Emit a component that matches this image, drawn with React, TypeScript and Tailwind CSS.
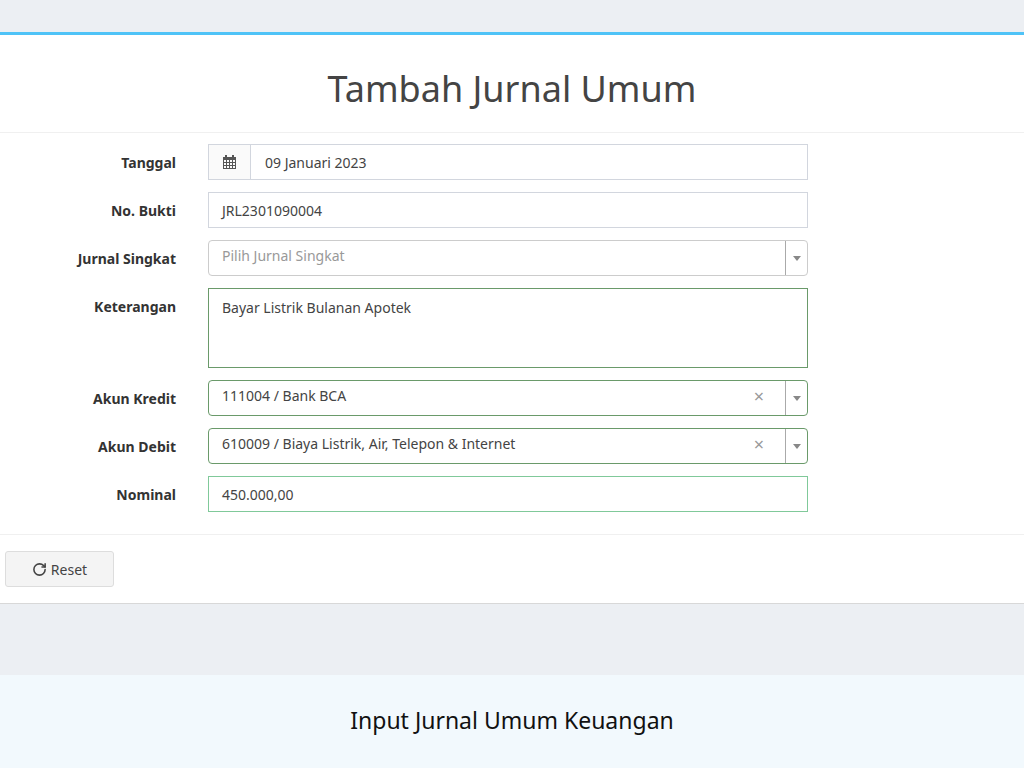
import { RotateCw } from "lucide-react";

function Row({ label, top, children }: { label: string; top?: boolean; children: React.ReactNode }) {
  return (
    <div className={`flex ${top ? "items-start" : "items-center"} gap-[32px]`}>
      <label className={`w-[176px] text-right text-[14px] font-bold text-[#333] ${top ? "pt-[8px]" : ""}`}>{label}</label>
      <div className="w-[600px]">{children}</div>
    </div>
  );
}

function Caret() {
  return (
    <div className="flex h-full w-[22px] items-center justify-center border-l border-[#aaa]">
      <div className="h-0 w-0 border-x-[4px] border-t-[5px] border-x-transparent border-t-[#888]" />
    </div>
  );
}

function Select({ value, placeholder }: { value?: string; placeholder?: string }) {
  return (
    <div className={`flex h-[36px] items-stretch rounded-[4px] border ${value ? "border-[#6a9a6a]" : "border-[#ccc]"} text-[14px]`}>
      <div className={`flex-1 pl-[13px] pt-[4px] ${value ? "text-[#444]" : "text-[#999]"}`}>{value ?? placeholder}</div>
      {value && <div className="flex w-[52px] items-center justify-center pb-[4px] text-[18px] text-[#999]">×</div>}
      <Caret />
    </div>
  );
}

export default function App() {
  return (
    <div className="flex h-[768px] flex-col bg-[#eceff3] font-['Lato',sans-serif]">
      <div className="h-[32px]" />
      <div className="border-t-[3px] border-[#4fc3f7] border-b border-b-[#d8d8d8] bg-white">
        <h1 className="h-[98px] border-b border-[#f0f0f0] pt-[34px] text-center text-[36px] leading-[40px] text-[#444]">Tambah Jurnal Umum</h1>
        <div className="flex flex-col gap-[12px] border-b border-[#f0f0f0] pb-[22px] pt-[11px]">
          <Row label="Tanggal">
            <div className="flex h-[36px] border border-[#d2d6de] text-[14px] text-[#444]">
              <div className="flex w-[42px] items-center justify-center border-r border-[#d2d6de] bg-[#fafafa]">
                <svg width="13" height="14" viewBox="0 0 13 14" fill="#555"><rect x="0" y="2" width="13" height="12" /><rect x="2" y="0" width="2" height="3" /><rect x="9" y="0" width="2" height="3" /><g fill="#fafafa"><rect x="1" y="5" width="2" height="2" /><rect x="4" y="5" width="2" height="2" /><rect x="7" y="5" width="2" height="2" /><rect x="10" y="5" width="2" height="2" /><rect x="1" y="8" width="2" height="2" /><rect x="4" y="8" width="2" height="2" /><rect x="7" y="8" width="2" height="2" /><rect x="10" y="8" width="2" height="2" /><rect x="1" y="11" width="2" height="2" /><rect x="4" y="11" width="2" height="2" /><rect x="7" y="11" width="2" height="2" /><rect x="10" y="11" width="2" height="2" /></g></svg>
              </div>
              <div className="flex items-center pl-[14px]">09 Januari 2023</div>
            </div>
          </Row>
          <Row label="No. Bukti">
            <div className="flex h-[36px] items-center border border-[#d2d6de] pl-[13px] text-[14px] text-[#444]">JRL2301090004</div>
          </Row>
          <Row label="Jurnal Singkat"><Select placeholder="Pilih Jurnal Singkat" /></Row>
          <Row label="Keterangan" top>
            <div className="h-[80px] border border-[#6a9a6a] pl-[13px] pt-[8px] text-[14px] text-[#444]">Bayar Listrik Bulanan Apotek</div>
          </Row>
          <Row label="Akun Kredit"><Select value="111004 / Bank BCA" /></Row>
          <Row label="Akun Debit"><Select value="610009 / Biaya Listrik, Air, Telepon & Internet" /></Row>
          <Row label="Nominal">
            <div className="flex h-[36px] items-center border border-[#80c99a] pl-[13px] text-[14px] text-[#444]">450.000,00</div>
          </Row>
        </div>
        <div className="px-[5px] py-[16px]">
          <button className="flex h-[36px] w-[109px] items-center justify-center gap-[4px] rounded-[3px] border border-[#ddd] bg-[#f4f4f4] text-[14px] text-[#444]">
            <RotateCw size={15} strokeWidth={2.5} />Reset
          </button>
        </div>
      </div>
      <div className="flex-1" />
      <div className="flex h-[93px] items-center justify-center bg-[#f2f9fd] pb-[3px] font-['Inter',sans-serif] text-[23px] text-[#111]">Input Jurnal Umum Keuangan</div>
    </div>
  );
}
